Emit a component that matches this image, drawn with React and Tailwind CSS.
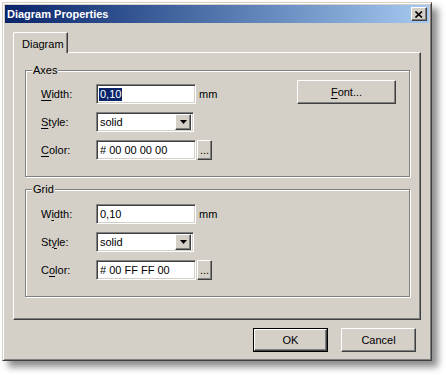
import React from 'react';

// Win2000-style "Diagram Properties" dialog

const raised =
  'border border-t-white border-l-white border-r-[#404040] border-b-[#404040] shadow-[inset_-1px_-1px_0_#808080] bg-[#d4d0c8]';
const sunken =
  'border border-t-[#808080] border-l-[#808080] border-r-white border-b-white shadow-[inset_1px_1px_0_#404040,inset_-1px_-1px_0_#d4d0c8] bg-white';

const Mn = ({ children }) => <span className="underline underline-offset-[2px]">{children}</span>;

const TextBox = ({ value, selected, w = 'w-[100px]' }) => (
  <div className={`${sunken} ${w} h-[20px] flex items-center pl-[2px]`}>
    {selected ? (
      <span className="bg-[#0a246a] text-white leading-[13px] px-[1px]">{value}</span>
    ) : (
      <span className="pl-[1px]">{value}</span>
    )}
  </div>
);

const Select = ({ value }) => (
  <div className={`${sunken} w-[98px] h-[20px] flex items-center justify-between pl-[3px] pr-[2px]`}>
    <span>{value}</span>
    <div className={`${raised} w-[16px] h-[16px] flex items-center justify-center`}>
      <svg width="7" height="4" viewBox="0 0 7 4">
        <path d="M0 0h7L3.5 4z" fill="#000" />
      </svg>
    </div>
  </div>
);

const Row = ({ label, children }) => (
  <div className="flex items-center">
    <span className="w-[55px]">{label}</span>
    {children}
  </div>
);

const Fields = ({ width, color, labels, selected }) => (
  <div className="flex flex-col gap-[8px]">
    <Row label={labels[0]}>
      <TextBox value={width} selected={selected} />
      <span className="ml-[3px]">mm</span>
    </Row>
    <Row label={labels[1]}>
      <Select value="solid" />
    </Row>
    <Row label={labels[2]}>
      <TextBox value={color} />
      <div className={`${raised} ml-[1px] w-[15px] h-[20px] flex items-end justify-center pb-[3px] leading-none`}>...</div>
    </Row>
  </div>
);

const GroupBox = ({ title, className, children }) => (
  <div
    className={`relative w-[385px] border border-[#808080] shadow-[1px_1px_0_#fff,inset_1px_1px_0_#fff] ${className}`}
  >
    <span className="absolute left-[6px] top-[-8px] bg-[#d4d0c8] px-[1px] leading-[14px]">{title}</span>
    {children}
  </div>
);

export default function App() {
  return (
    <div className="w-[446px] h-[375px] bg-white pt-[2px] pl-[2px] font-['Liberation_Sans',Arial,sans-serif] text-[11px] text-black">
      <div className="w-[430px] h-[359px] bg-[#d4d0c8] border border-t-[#d4d0c8] border-l-[#d4d0c8] border-r-[#404040] border-b-[#404040] p-[2px] shadow-[6px_6px_7px_rgba(0,0,0,0.45),inset_1px_1px_0_#fff,inset_-1px_-1px_0_#808080] flex flex-col">
        {/* title bar */}
        <div className="h-[18px] bg-gradient-to-r from-[#0a246a] to-[#a6caf0] flex items-center justify-between pl-[2px] pr-[2px]">
          <span className="text-white font-bold">Diagram Properties</span>
          <div className={`${raised} w-[16px] h-[14px] flex items-center justify-center`}>
            <svg width="8" height="7" viewBox="0 0 8 7">
              <path d="M0.5 0.5L7 6.5M7 0.5L0.5 6.5" stroke="#000" strokeWidth="1.6" />
            </svg>
          </div>
        </div>

        <div className="px-[8px] pt-[9px]">
          {/* tab strip */}
          <div className="h-[20px] flex">
            <div className="relative z-10 h-[21px] w-[55px] bg-[#d4d0c8] border-t border-l border-t-white border-l-white rounded-tl-[2px] border-r border-r-[#404040] shadow-[inset_-1px_0_0_#808080] pl-[8px] pt-[3px]">
              Diagram
            </div>
          </div>

          {/* tab panel */}
          <div className="w-[408px] h-[268px] border border-t-white border-l-white border-r-[#404040] border-b-[#404040] shadow-[inset_-1px_-1px_0_#808080] pt-[17px] pl-[11px]">
            <GroupBox title="Axes" className="h-[107px] pt-[9px] pl-[15px] pr-[13px]">
              <div className="flex items-start justify-between">
                <div className="mt-[4px]">
                  <Fields
                    width="0,10"
                    color="# 00 00 00 00"
                    selected
                    labels={[
                      <><Mn>W</Mn>idth:</>,
                      <><Mn>S</Mn>tyle:</>,
                      <><Mn>C</Mn>olor:</>,
                    ]}
                  />
                </div>
                <div className={`${raised} w-[99px] h-[24px] flex items-center justify-center`}>
                  <span><Mn>F</Mn>ont...</span>
                </div>
              </div>
            </GroupBox>

            <GroupBox title="Grid" className="h-[108px] mt-[12px] pt-[14px] pl-[15px]">
              <Fields
                width="0,10"
                color="# 00 FF FF 00"
                labels={[
                  <>W<Mn>i</Mn>dth:</>,
                  <>St<Mn>y</Mn>le:</>,
                  <>C<Mn>o</Mn>lor:</>,
                ]}
              />
            </GroupBox>
          </div>

          {/* dialog buttons */}
          <div className="flex justify-end gap-[13px] mt-[8px] pr-[5px]">
            <div className="w-[75px] h-[24px] border border-black">
              <div className={`${raised} w-full h-full flex items-center justify-center`}>OK</div>
            </div>
            <div className={`${raised} w-[75px] h-[24px] flex items-center justify-center`}>Cancel</div>
          </div>
        </div>
      </div>
    </div>
  );
}
